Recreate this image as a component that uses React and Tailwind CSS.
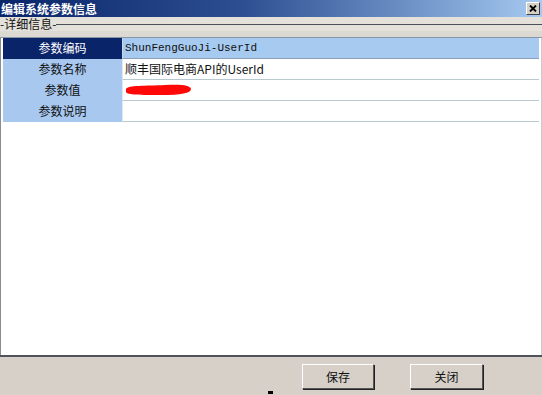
import React from "react";

const rows = [
  { label: "参数编码", value: "ShunFengGuoJi-UserId", mono: true, active: true },
  { label: "参数名称", value: "顺丰国际电商API的UserId" },
  { label: "参数值", value: "", redacted: true },
  { label: "参数说明", value: "" },
];

const cjk = { fontFamily: '"SimSun", "Noto Sans CJK SC", "Liberation Sans", sans-serif' };

export default function App() {
  return (
    <div className="w-[542px] h-[395px] flex flex-col bg-white overflow-hidden relative" style={cjk}>
      {/* Title bar */}
      <div className="h-[17px] flex items-center justify-between bg-gradient-to-r from-[#0a246a] via-[#2e4f92] via-45% to-[#a6caf0]">
        <span className="text-white text-[12px] font-bold leading-none pl-[1px]">编辑系统参数信息</span>
        <div className="w-[14px] h-[13px] mr-[2px] bg-[#d4d0c8] border border-t-white border-l-white border-r-[#404040] border-b-[#404040] flex items-center justify-center">
          <svg width="8" height="7" viewBox="0 0 8 7">
            <path d="M1 0.5 L7 6.5 M7 0.5 L1 6.5" stroke="#000" strokeWidth="1.8" />
          </svg>
        </div>
      </div>

      {/* Group label */}
      <div className="h-[14px] flex items-center bg-[#e4e0da]">
        <span className="text-[12px] leading-none text-[#111]">-详细信息-</span>
        <div className="flex-1 h-[1px] bg-[#4a5058] mt-[1px]" />
      </div>
      <div className="h-[7px] bg-[#dcd8d2] border-b border-[#8a96a8]" />

      {/* Table */}
      <div className="flex-1 flex flex-col bg-white border-l border-[#8c8c8c] border-r border-r-[#c8ccd0] pl-[2px] pr-[2px]">
        {rows.map((r) => (
          <div key={r.label} className="flex h-[21px]">
            <div
              className={`w-[119px] flex items-center justify-center text-[12px] border-b ${
                r.active ? "bg-[#0a246a] text-white border-[#0a246a]" : "bg-[#a8c8f0] text-[#111] border-[#a8c8f0]"
              }`}>
              {r.label}
            </div>
            <div
              className={`flex-1 flex items-center pl-[2px] text-[12px] border-b border-l ${
                r.active
                  ? "bg-[#a6caf0] border-[#8aa0b8] border-l-[#c8d8ea]"
                  : "bg-white border-[#b8c8d0] border-l-[#e0e8f0]"
              }`}>
              {r.redacted ? (
                <svg width="68" height="14" viewBox="0 0 68 14">
                  <path d="M1 6 C3 2 20 3 40 2 C55 1 66 2 66 6 C66 10 56 12 36 12 C16 12 2 12 1 9 Z" fill="#ff0808" />
                </svg>
              ) : (
                <span
                  className="text-[#111] leading-none"
                  style={r.mono ? { fontFamily: '"Liberation Mono", "DejaVu Sans Mono", monospace', fontSize: "11px" } : undefined}>
                  {r.value}
                </span>
              )}
            </div>
          </div>
        ))}
      </div>

      {/* Footer */}
      <div className="h-[40px] border-t-2 border-[#50545a] bg-[#d6d0c9] flex items-start pt-[7px]">
        <div className="ml-[302px] w-[72px] h-[25px] flex items-center justify-center text-[12px] text-[#111] bg-[#d6d0c9] border border-t-white border-l-white border-r-[#555] border-b-[#555] shadow-[1px_1px_0_#222]">
          保存
        </div>
        <div className="ml-[36px] w-[73px] h-[25px] flex items-center justify-center text-[12px] text-[#111] bg-[#d6d0c9] border border-t-white border-l-white border-r-[#555] border-b-[#555] shadow-[1px_1px_0_#222]">
          关闭
        </div>
      </div>
      <div className="absolute left-[268px] top-[391px] w-[5px] h-[3px] bg-black" />
    </div>
  );
}
